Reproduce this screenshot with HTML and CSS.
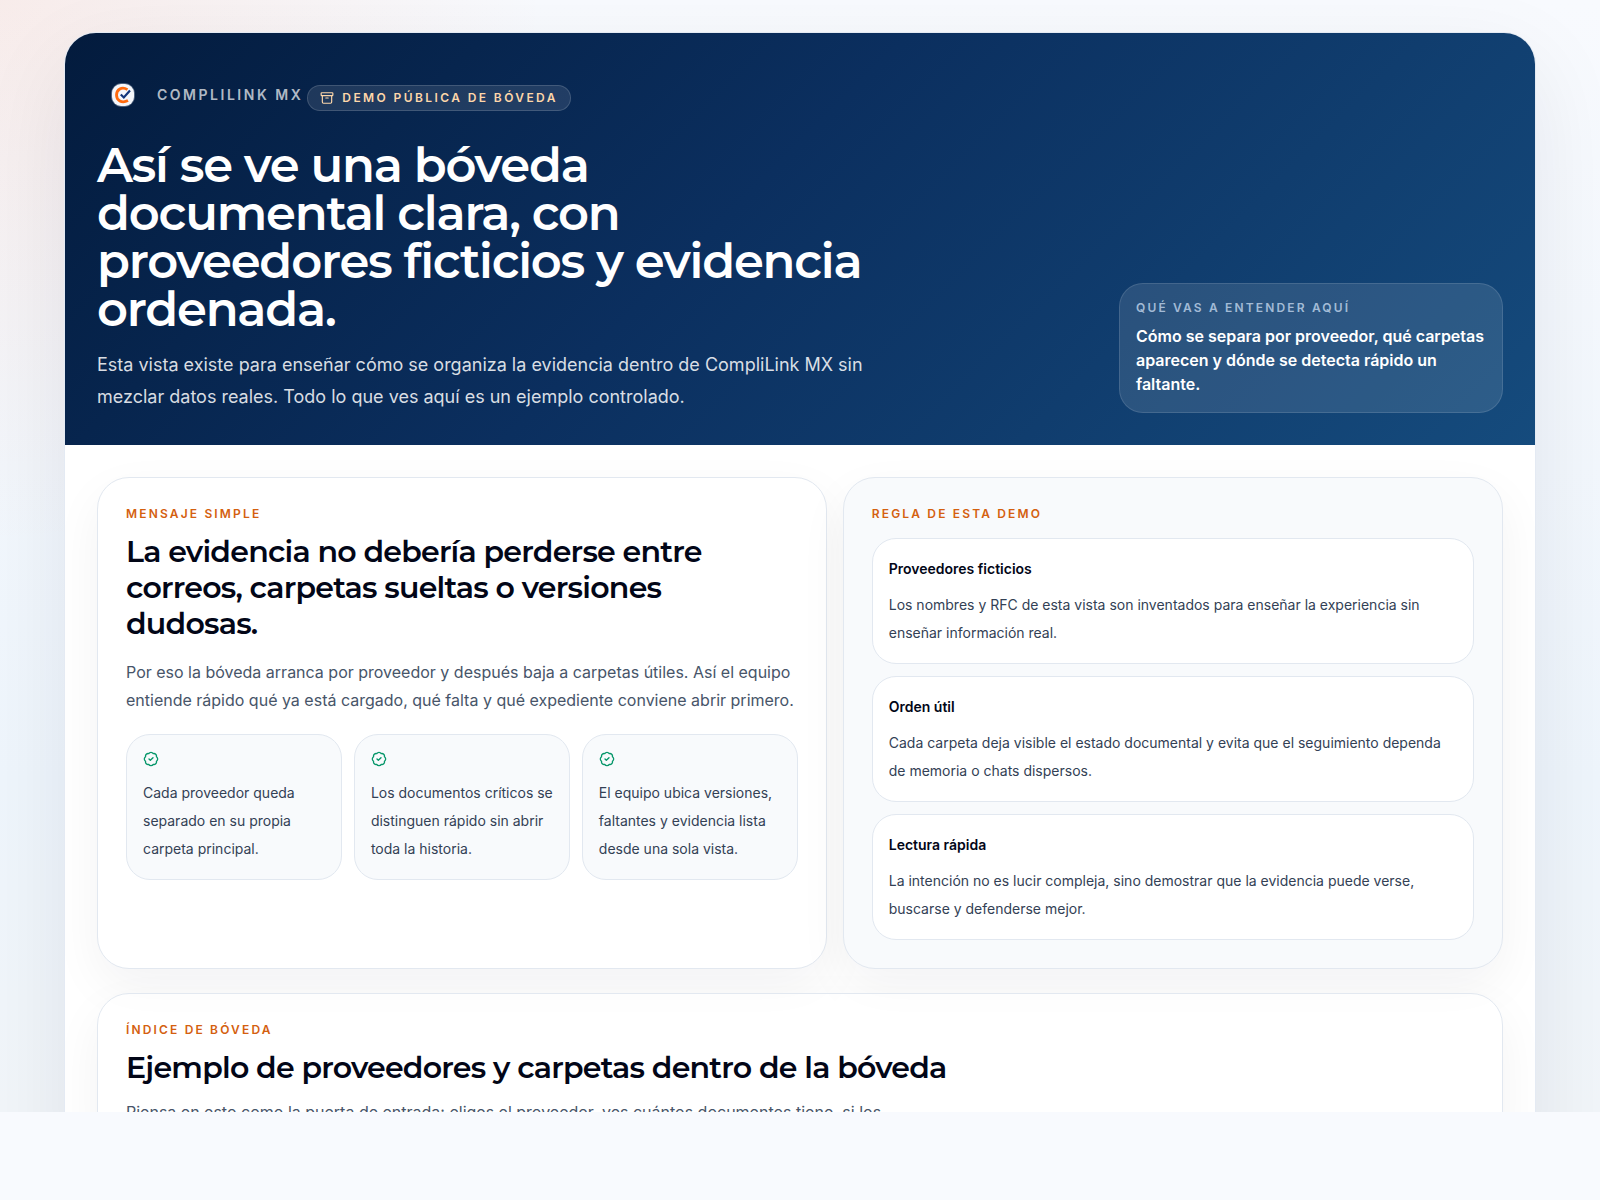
FILE: index.html
```html
<!DOCTYPE html>
<html lang="es">
<head>
<meta charset="utf-8">
<meta name="viewport" content="width=device-width, initial-scale=1">
<title>CompliLink MX · Demo pública de bóveda</title>
<link rel="stylesheet" href="styles.css">
</head>
<body>
<svg class="sprite" aria-hidden="true">
  <symbol id="badge-check" viewBox="0 0 24 24">
    <path d="M3.85 8.62a4 4 0 0 1 4.78-4.77 4 4 0 0 1 6.74 0 4 4 0 0 1 4.78 4.78 4 4 0 0 1 0 6.74 4 4 0 0 1-4.77 4.78 4 4 0 0 1-6.75 0 4 4 0 0 1-4.78-4.77 4 4 0 0 1 0-6.76Z"/>
    <path d="m9 12 2 2 4-4"/>
  </symbol>
</svg>
<main class="page">
  <div class="shell">
    <header class="hero">
      <div class="hero-copy">
        <div class="brand-row">
          <div class="brand">
            <span class="brand-mark">
              <svg viewBox="0 0 24 24" width="24" height="24" aria-hidden="true">
                <rect x="0" y="0" width="24" height="24" rx="11" fill="#8d9ab0" opacity=".55"/>
                <rect x="1" y="1" width="22" height="22" rx="9" fill="#f4f6fb"/>
                <path d="M16.500 6.600C10.500 3 5.500 7 5.500 12s5 9 11.500 5.600" fill="none" stroke="#ff6b0f" stroke-width="2.800"/>
                <path d="m9.800 11.500 3 3 6.200-7" fill="none" stroke="#12357a" stroke-width="2.200"/>
              </svg>
            </span>
            <span class="brand-name">COMPLILINK MX</span>
          </div>
          <div class="pill">
            <svg class="icon icon-sm" viewBox="0 0 24 24" aria-hidden="true"><rect width="20" height="5" x="2" y="3" rx="1"/><path d="M4 8v11a2 2 0 0 0 2 2h12a2 2 0 0 0 2-2V8"/><path d="M10 12h4"/></svg>
            DEMO PÚBLICA DE BÓVEDA
          </div>
        </div>
        <h1>Así se ve una bóveda documental clara, con proveedores ficticios y evidencia ordenada.</h1>
        <p class="lead">Esta vista existe para enseñar cómo se organiza la evidencia dentro de CompliLink MX sin mezclar datos reales. Todo lo que ves aquí es un ejemplo controlado.</p>
      </div>
      <aside class="hero-note">
        <p class="note-label">QUÉ VAS A ENTENDER AQUÍ</p>
        <p class="note-text">Cómo se separa por proveedor, qué carpetas aparecen y dónde se detecta rápido un faltante.</p>
      </aside>
    </header>
    <div class="content">
      <div class="columns">
        <section class="card">
          <p class="eyebrow">MENSAJE SIMPLE</p>
          <h2>La evidencia no debería perderse entre correos, carpetas sueltas o versiones dudosas.</h2>
          <p class="text message">Por eso la bóveda arranca por proveedor y después baja a carpetas útiles. Así el equipo entiende rápido qué ya está cargado, qué falta y qué expediente conviene abrir primero.</p>
          <div class="points">
            <article class="tile"><svg class="icon check"><use href="#badge-check"/></svg><p>Cada proveedor queda separado en su propia carpeta principal.</p></article>
            <article class="tile"><svg class="icon check"><use href="#badge-check"/></svg><p>Los documentos críticos se distinguen rápido sin abrir toda la historia.</p></article>
            <article class="tile"><svg class="icon check"><use href="#badge-check"/></svg><p>El equipo ubica versiones, faltantes y evidencia lista desde una sola vista.</p></article>
          </div>
        </section>
        <section class="card card-soft">
          <p class="eyebrow">REGLA DE ESTA DEMO</p>
          <div class="rules">
            <article class="rule"><h3>Proveedores ficticios</h3><p>Los nombres y RFC de esta vista son inventados para enseñar la experiencia sin enseñar información real.</p></article>
            <article class="rule"><h3>Orden útil</h3><p>Cada carpeta deja visible el estado documental y evita que el seguimiento dependa de memoria o chats dispersos.</p></article>
            <article class="rule"><h3>Lectura rápida</h3><p>La intención no es lucir compleja, sino demostrar que la evidencia puede verse, buscarse y defenderse mejor.</p></article>
          </div>
        </section>
      </div>
      <section class="card card-index">
        <p class="eyebrow">ÍNDICE DE BÓVEDA</p>
        <h2>Ejemplo de proveedores y carpetas dentro de la bóveda</h2>
        <p class="text intro">Piensa en esto como la puerta de entrada: eliges el proveedor, ves cuántos documentos tiene, si los</p>
      </section>
    </div>
  </div>
</main>
</body>
</html>
```
FILE: styles.css
```css
*, *::before, *::after { box-sizing: border-box; }

body {
  margin: 0;
  background: #f8fafe;
  color: #020617;
  font-family: Inter, "Liberation Sans", sans-serif;
  -webkit-font-smoothing: antialiased;
}

h1, h2, h3, p { margin: 0; }

.sprite { display: none; }

.icon {
  display: block;
  width: 16px;
  height: 16px;
  flex: none;
  fill: none;
  stroke: currentColor;
  stroke-width: 2;
  stroke-linecap: round;
  stroke-linejoin: round;
}

.icon-sm { width: 14px; height: 14px; }

.page {
  height: calc(100vh - 88px);
  overflow: hidden;
  padding: 32px 64px;
  background:
    radial-gradient(circle at top left, rgba(244, 110, 60, .1), transparent 28%),
    linear-gradient(180deg, #f8fafe 0%, #eef5fc 70%, #f1f5f9 100%);
}

.shell {
  border: 1px solid #e4eaf3;
  border-radius: 32px;
  overflow: hidden;
  background: #fff;
  box-shadow: 0 30px 90px rgba(15, 23, 42, .08);
}

.hero {
  display: flex;
  align-items: flex-end;
  justify-content: space-between;
  gap: 24px;
  padding: 32px;
  color: #fff;
  background: linear-gradient(135deg, #031b3d 0%, #0b2f5f 45%, #154b7d 100%);
}

.hero-copy { max-width: 768px; }

.brand-row {
  display: flex;
  align-items: flex-start;
  gap: 4px;
  padding: 4px 0 20px;
}

.brand {
  display: flex;
  align-items: center;
  gap: 8px;
}

.brand-mark {
  display: grid;
  place-items: center;
  width: 52px;
  height: 52px;
}

.brand-name {
  color: rgba(255, 255, 255, .7);
  font-size: 14px;
  font-weight: 600;
  line-height: 20px;
  letter-spacing: .18em;
}

.pill {
  display: flex;
  align-items: center;
  gap: 8px;
  margin-top: 16px;
  padding: 4px 12px;
  border: 1px solid rgba(255, 255, 255, .15);
  border-radius: 999px;
  background: rgba(255, 255, 255, .1);
  color: #fed7aa;
  font-size: 12px;
  font-weight: 600;
  line-height: 16px;
  letter-spacing: .2em;
}

h1, h2 {
  font-family: Montserrat, Inter, sans-serif;
  font-weight: 600;
  letter-spacing: -.025em;
}

h1 { font-size: 48px; line-height: 48px; }
h2 { margin-top: 12px; font-size: 30px; line-height: 36px; }

.lead {
  margin-top: 16px;
  color: rgba(255, 255, 255, .85);
  font-size: 18px;
  line-height: 32px;
}

.hero-note {
  flex: 0 0 384px;
  padding: 16px;
  border: 1px solid rgba(255, 255, 255, .12);
  border-radius: 24px;
  background: rgba(255, 255, 255, .11);
}

.note-label {
  color: rgba(219, 234, 254, .7);
  font-size: 12px;
  font-weight: 600;
  line-height: 16px;
  letter-spacing: .18em;
}

.note-text {
  margin-top: 8px;
  font-size: 16px;
  font-weight: 600;
  line-height: 24px;
}

.content { display: grid; gap: 24px; padding: 32px; }

.columns {
  display: grid;
  grid-template-columns: 1.05fr .95fr;
  gap: 16px;
}

.card {
  padding: 28px;
  border: 1px solid #e2e8f0;
  border-radius: 32px;
  background: #fff;
  box-shadow: 0 18px 50px rgba(15, 23, 42, .05);
}

.card-soft { background: #f8fafc; }
.card-index { background: rgba(255, 255, 255, .5); }

.eyebrow {
  color: #d4600f;
  font-size: 12px;
  font-weight: 600;
  line-height: 16px;
  letter-spacing: .18em;
}

.text { color: #475569; font-size: 16px; line-height: 28px; }
.message { margin-top: 16px; }
.intro { max-width: 768px; margin-top: 12px; }

.points {
  display: grid;
  grid-template-columns: repeat(3, 1fr);
  gap: 12px;
  margin-top: 20px;
}

.tile, .rule {
  padding: 16px;
  border: 1px solid #e2e8f0;
  border-radius: 24px;
  color: #334155;
  font-size: 14px;
  line-height: 28px;
}

.tile { background: #f8fafc; }
.tile p { margin-top: 12px; }
.check { color: #059669; }

.rules { display: grid; gap: 12px; margin-top: 16px; }
.rule { background: #fff; }
.rule h3 { color: #020617; font-size: 14px; font-weight: 600; line-height: 28px; }
.rule p { margin-top: 8px; }
```
